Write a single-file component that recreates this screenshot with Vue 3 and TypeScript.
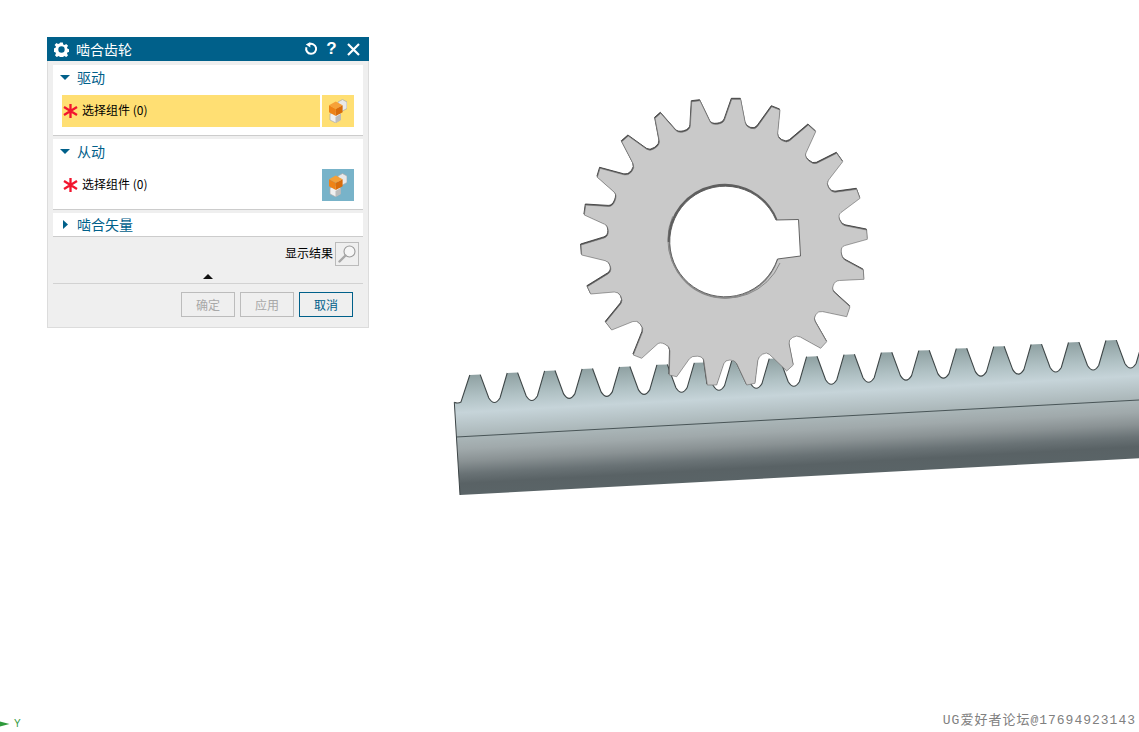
<script setup lang="ts">
interface Section {
  title: string
  open: boolean
  active?: boolean
}

const sections: Section[] = [
  { title: '驱动', open: true, active: true },
  { title: '从动', open: true },
  { title: '啮合矢量', open: false },
]

const buttons = [
  { label: '确定', disabled: true },
  { label: '应用', disabled: true },
  { label: '取消', disabled: false },
]

// gear outline, traced at 3x: tipL, tipR, valleyA, valleyB for every tooth
const gearTrace = [
  485, 28, 512, 28, 528, 110, 555, 120, 605, 50, 630, 60, 622, 143, 650, 160, 715, 105, 737, 125,
  703, 200, 730, 225, 800, 190, 818, 215, 768, 280, 785, 308, 860, 298, 870, 325, 803, 375, 815, 405,
  890, 420, 892, 448, 812, 470, 815, 505, 880, 540, 882, 568, 795, 572, 785, 600, 840, 650, 830, 680,
  745, 662, 730, 685, 770, 755, 752, 775, 680, 735, 655, 750, 670, 825, 650, 843, 590, 785, 565, 800,
  555, 880, 530, 885, 495, 810, 465, 810, 440, 885, 412, 885, 400, 800, 365, 797, 320, 860, 298, 855,
  300, 770, 270, 755, 215, 805, 190, 795, 222, 715, 200, 690, 125, 720, 107, 697, 160, 632, 145, 605,
  62, 612, 52, 590, 125, 545, 118, 515, 35, 495, 33, 465, 115, 440, 115, 408, 43, 375, 47, 345,
  128, 350, 142, 315, 82, 262, 90, 235, 175, 258, 195, 232, 155, 155, 175, 138, 240, 185, 270, 165,
  255, 85, 272, 70, 325, 130, 360, 120, 365, 35, 390, 32, 425, 105, 460, 100,
]

type Pt = [number, number]
const fmt = (p: Pt) => `${p[0].toFixed(1)} ${p[1].toFixed(1)}`
const mix = (a: Pt, b: Pt, t: number): Pt => [a[0] + (b[0] - a[0]) * t, a[1] + (b[1] - a[1]) * t]

function gearPath(): string {
  const pts: Pt[] = []
  for (let i = 0; i < gearTrace.length; i += 2) {
    pts.push([570 + gearTrace[i] / 3, 90 + gearTrace[i + 1] / 3])
  }
  let d = ''
  for (let i = 0; i < pts.length; i += 4) {
    const tipL = pts[i]
    const tipR = pts[i + 1]
    const a = pts[i + 2]
    const b = pts[i + 3]
    const next = pts[(i + 4) % pts.length]
    d += (i ? 'L' : 'M') + fmt(tipL) + 'L' + fmt(tipR)
    // round off the valley so it is not a flat notch
    d += 'L' + fmt(mix(a, tipR, 0.15))
    d += 'Q' + fmt(a) + ' ' + fmt(mix(a, b, 0.5))
    d += 'Q' + fmt(b) + ' ' + fmt(mix(b, next, 0.15))
  }
  return d + 'Z'
}

// hole + keyway
const hole = 'M776 220A55.3 55.3 0 1 0 777.5 259L800.5 256L798.5 219.5Z'

const pitch = 37.42
const slope = -0.0543
const tipAt = (x: number) => 375 + slope * (x - 475)

function rackPaths() {
  const start = 'M454.3 402.2Q458 404 461 402'
  let body = start
  let flanks = start
  for (let i = 0; i < 19; i++) {
    const tx = 475 + pitch * i
    const ty = tipAt(tx)
    const tip = `L${(tx - 5.2).toFixed(1)} ${ty.toFixed(1)}`
    body += tip
    flanks += tip
    const rx = tx + 19.4
    const low = ty + 27.5
    const tail =
      `L${(rx - 5.6).toFixed(1)} ${(low - 4.5).toFixed(1)}` +
      `Q${rx.toFixed(1)} ${(low + 4.5).toFixed(1)} ${(rx + 5.6).toFixed(1)} ${(low - 4.5).toFixed(1)}`
    body += `L${(tx + 5.2).toFixed(1)} ${(ty - 0.4).toFixed(1)}` + tail
    flanks += `M${(tx + 5.2).toFixed(1)} ${(ty - 0.4).toFixed(1)}` + tail
  }
  body += 'L1200 455L460 495Z'
  return { body, flanks }
}

const gear = gearPath()
const rack = rackPaths()
</script>

<template>
  <div class="page">
    <svg class="scene" width="1139" height="732" viewBox="0 0 1139 732">
      <defs>
        <linearGradient id="rackFill" gradientUnits="userSpaceOnUse" x1="470" y1="372" x2="476.7" y2="495">
          <stop offset="0" stop-color="#8a9c9d" />
          <stop offset="0.2" stop-color="#b0c1c4" />
          <stop offset="0.325" stop-color="#c6d4d9" />
          <stop offset="0.52" stop-color="#aab6b8" />
          <stop offset="0.62" stop-color="#a0a9ab" />
          <stop offset="0.72" stop-color="#8a9294" />
          <stop offset="0.82" stop-color="#6a7376" />
          <stop offset="0.9" stop-color="#596265" />
          <stop offset="1" stop-color="#5a6467" />
        </linearGradient>
      </defs>

      <path :d="rack.body" fill="url(#rackFill)" />
      <path :d="rack.flanks" fill="none" stroke="#3f4748" stroke-width="1.1" />
      <path d="M454.3 402.2L460 495" fill="none" stroke="#3c4446" stroke-width="1" />
      <path d="M456.3 437L1139 400" fill="none" stroke="#3d4a4c" stroke-width="0.9" />

      <g transform="translate(-0.4,-1)">
        <path :d="gear" fill="#3f3f3f" stroke="#3f3f3f" stroke-width="0.9" stroke-linejoin="round" />
      </g>
      <path :d="gear" fill="#c9c9c9" stroke="#777" stroke-width="0.7" stroke-linejoin="round" />

      <path d="M780 263A58 58 0 0 1 672.7 216.400" fill="none" stroke="#777" stroke-width="0.8" />
      <path d="M669.4 242A55.3 55.3 0 0 1 776 220" fill="none" stroke="#5f5f5f" stroke-width="3.2" />
      <path d="M777.5 259A55.3 55.3 0 0 1 669.4 242" fill="none" stroke="#8a8a8a" stroke-width="1.4" />
      <path :d="hole" fill="#fff" stroke="#555" stroke-width="0.9" stroke-linejoin="round" />
    </svg>

    <section class="dialog">
      <header class="titlebar">
        <svg class="gear-icon" width="15" height="15" viewBox="0 0 16 16">
          <path
            fill="#fff"
            fill-rule="evenodd"
            d="M6.6 0.6h2.8l.4 2 1.5.6 1.7-1.1 2 2-1.2 1.700.7 1.500 2 .4v2.800l-2 .4-.7 1.500 1.200 1.700-2 2-1.700-1.100-1.500.6-.4 2H6.600l-.4-2-1.500-.6-1.700 1.100-2-2 1.100-1.700-.6-1.500-2-.4V6.700l2-.4.6-1.500L.6 3.100l2-2 1.700 1.100 1.500-.6zM8 4.600a3.400 3.400 0 1 0 0 6.800 3.400 3.400 0 0 0 0-6.800z"
          />
        </svg>
        <span class="title">啮合齿轮</span>
        <svg class="reset" width="14" height="14" viewBox="0 0 14 14">
          <path d="M4.800 2.400A5 5 0 1 1 2.400 5.200" fill="none" stroke="#fff" stroke-width="2" />
          <path d="M6.300 0L6.300 5.400L1.800 2.600Z" fill="#fff" />
        </svg>
        <span class="help">?</span>
        <svg class="close" width="13" height="13" viewBox="0 0 13 13">
          <path d="M1 1L12 12M12 1L1 12" stroke="#fff" stroke-width="2.200" />
        </svg>
      </header>

      <div class="sections">
        <div v-for="s in sections" :key="s.title" class="group">
          <div class="group-head" :class="{ closed: !s.open }">
            <svg v-if="s.open" class="caret" width="10" height="5" viewBox="0 0 10 5">
              <path d="M0 0H10L5 5Z" fill="#00608a" />
            </svg>
            <svg v-else class="caret right" width="5" height="9" viewBox="0 0 5 9">
              <path d="M0 0L5 4.500L0 9Z" fill="#00608a" />
            </svg>
            <span>{{ s.title }}</span>
          </div>
          <div v-if="s.open" class="pick-row">
            <div class="pick" :class="{ active: s.active }">
              <svg class="star" width="15" height="14" viewBox="0 0 15 14">
                <path d="M7.500 0V14M1 3L14 11M14 3L1 11" stroke="#f2152e" stroke-width="2.300" />
              </svg>
              <span>选择组件 (0)</span>
            </div>
            <button class="pick-btn" :class="{ active: s.active }">
              <svg width="18" height="24" viewBox="0 0 18 24">
                <path d="M9 3L13.500 0.500L18 3V9.500L13.500 12L9 9.500Z" fill="#e9e9e9" stroke="#a9a9a9" stroke-width="0.700" />
                <path d="M1 15L6 12.500L11.500 15V21L6.500 23.800L1 21Z" fill="#f0f0f0" stroke="#a9a9a9" stroke-width="0.700" />
                <path d="M6.500 18L11.500 15V21L6.500 23.800Z" fill="#bcbcbc" />
                <path d="M0 6.300L6.800 2.500L13.600 6.300L6.800 10Z" fill="#f6a138" />
                <path d="M0 6.300L6.800 10V17L0 13.300Z" fill="#ee8216" />
                <path d="M6.800 10L13.600 6.300V13.300L6.800 17Z" fill="#d96c0a" />
              </svg>
            </button>
          </div>
        </div>
      </div>

      <div class="result-row">
        <span>显示结果</span>
        <button class="lens-btn">
          <svg width="20" height="20" viewBox="0 0 20 20">
            <circle cx="12.500" cy="7.500" r="5.500" fill="#f6f6f6" stroke="#9a9a9a" stroke-width="1.100" />
            <path d="M8.500 11.500L2.500 17.500" stroke="#a8a8a8" stroke-width="2.400" stroke-linecap="round" />
          </svg>
        </button>
      </div>

      <div class="fold"><i></i></div>

      <footer class="actions">
        <button v-for="b in buttons" :key="b.label" class="action" :class="{ off: b.disabled }">{{ b.label }}</button>
      </footer>
    </section>

    <div class="axis">
      <svg width="10" height="6" viewBox="0 0 10 6">
        <path d="M0 0.500L9.500 3L0 5.500Z" fill="#2f9a3c" />
      </svg>
      <span>Y</span>
    </div>

    <div class="mark">UG爱好者论坛@17694923143</div>
  </div>
</template>

<style scoped>
.page {
  position: relative;
  width: 1139px;
  height: 732px;
  overflow: hidden;
  background: #fff;
  font-family: "Noto Sans CJK SC", "Liberation Sans", sans-serif;
  font-size: 12px;
  color: #000;
}
.scene {
  position: absolute;
  left: 0;
  top: 0;
  filter: blur(0.35px);
}

.dialog {
  position: absolute;
  left: 47px;
  top: 37px;
  width: 322px;
  height: 291px;
  box-sizing: border-box;
  background: #efefef;
  border: 1px solid #dcdcdc;
  border-top: none;
  display: flex;
  flex-direction: column;
}
.titlebar {
  height: 24px;
  margin: 0 -1px;
  background: #00608a;
  color: #fff;
  display: flex;
  align-items: center;
  padding: 0 9px 0 7px;
  flex: none;
}
.title {
  font-size: 14px;
  line-height: 24px;
  margin-left: 7px;
  flex: 1;
}
.reset { margin-right: 8px; }
.help {
  font-family: "Liberation Sans", sans-serif;
  font-weight: 700;
  font-size: 17px;
  width: 11px;
  text-align: center;
  margin-right: 10px;
}

.sections {
  padding: 4px 5px 0;
  display: flex;
  flex-direction: column;
  gap: 3px;
}
.group {
  background: #fff;
  border-bottom: 1px solid #ccc;
}
.group:nth-child(-n+2) { height: 70px; box-sizing: content-box; }
.group-head {
  display: flex;
  align-items: center;
  height: 26px;
  box-sizing: border-box;
  padding-left: 7px;
  padding-bottom: 2px;
  color: #00608a;
  font-size: 14px;
  line-height: 24px;
}
.group-head span { margin-left: 7px; }
.group-head.closed { height: 23px; padding: 0 0 0 10px; line-height: 23px; }
.group-head.closed span { margin-left: 9px; }

.pick-row {
  display: flex;
  gap: 2px;
  margin: 4px 9px 0;
  height: 32px;
}
.pick {
  flex: 1;
  display: flex;
  align-items: center;
  padding-left: 1px;
}
.pick.active { background: #ffdf73; }
.pick span { margin: 0 0 2px 4px; line-height: 30px; }
.pick-btn {
  width: 32px;
  height: 32px;
  padding: 0;
  border: none;
  background: #78b3c9;
  display: flex;
  align-items: center;
  justify-content: center;
}
.pick-btn.active { background: #ffdf73; }

.result-row {
  display: flex;
  justify-content: flex-end;
  align-items: center;
  gap: 2px;
  margin-top: 5px;
  padding-right: 9px;
  height: 24px;
  flex: none;
}
.result-row span { margin-bottom: 3px; }
.lens-btn {
  width: 24px;
  height: 24px;
  box-sizing: border-box;
  padding: 0;
  border: 1px solid #bbb;
  background: #efefef;
  display: flex;
  align-items: center;
  justify-content: center;
}

.fold {
  margin: 0 5px;
  height: 18px;
  flex: none;
  border-bottom: 1px solid #d2d2d2;
  display: flex;
  justify-content: center;
  padding-top: 8px;
  box-sizing: border-box;
}
.fold i {
  width: 0;
  height: 0;
  border-left: 5px solid transparent;
  border-right: 5px solid transparent;
  border-bottom: 5px solid #111;
}

.actions {
  display: flex;
  justify-content: flex-end;
  gap: 5px;
  padding: 8px 15px 0 0;
}
.action {
  width: 54px;
  height: 25px;
  box-sizing: border-box;
  padding: 0;
  font: inherit;
  background: #efefef;
  color: #00608a;
  border: 1px solid #00608a;
}
.action.off {
  color: #a8a8a8;
  border-color: #bcbcbc;
}

.axis {
  position: absolute;
  left: 0;
  top: 718px;
  display: flex;
  align-items: center;
  gap: 4px;
  color: #2f9a3c;
  font-family: "Liberation Sans", sans-serif;
  font-size: 10px;
  line-height: 12px;
}
.mark {
  position: absolute;
  right: 3px;
  top: 712px;
  font-family: "Liberation Mono", "Noto Sans CJK SC", monospace;
  font-size: 13px;
  letter-spacing: 1px;
  line-height: 18px;
  color: #808080;
}
</style>
